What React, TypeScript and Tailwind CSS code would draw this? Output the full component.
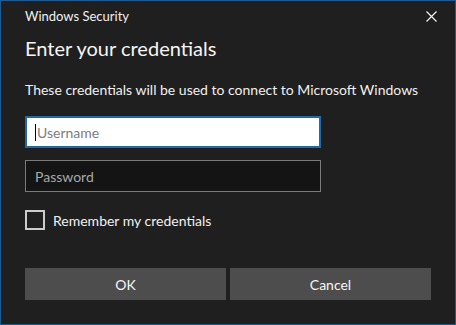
import React from "react";

export default function App() {
  const font = { fontFamily: 'Lato, "Noto Sans", sans-serif' };
  return (
    <div className="w-[456px] h-[325px] bg-[#1f1f1f] border border-[#1d5a94] text-white flex flex-col px-[24px]" style={font}>
      <div className="relative mt-[7px] h-[16px] flex items-center">
        <span className="text-[13px] leading-[16px] text-[#f0f0f0] whitespace-nowrap">Windows Security</span>
        <svg className="absolute right-[-6px] top-[3px]" width="11" height="11" viewBox="0 0 11 11">
          <path d="M0.5 0.5 L10.5 10.5 M10.5 0.5 L0.5 10.5" stroke="#f2f2f2" strokeWidth="1.2" />
        </svg>
      </div>
      <div className="mt-[10px] text-[20px] leading-[28px] text-[#f5f5f5] whitespace-nowrap">Enter your credentials</div>
      <div className="mt-[18px] text-[14px] leading-[20px] text-[#f0f0f0] whitespace-nowrap">
        These credentials will be used to connect to Microsoft Windows
      </div>
      <div className="mt-[16px] w-[296px] h-[32px] bg-white border-2 border-[#1f6aab] flex items-center pl-[8px]">
        <span className="w-[1px] h-[17px] bg-black mr-[1px]" />
        <span className="text-[14px] text-[#7d7d7d]">Username</span>
      </div>
      <div className="mt-[12px] w-[296px] h-[32px] bg-[#141414] border border-[#7a7a7a] flex items-center pl-[9px]">
        <span className="text-[14px] text-[#a9a9a9]">Password</span>
      </div>
      <div className="mt-[18px] h-[20px] flex items-center">
        <span className="w-[20px] h-[20px] border-2 border-[#cccccc]" />
        <span className="ml-[8px] text-[14px] text-[#f0f0f0] whitespace-nowrap">Remember my credentials</span>
      </div>
      <div className="mt-[38px] flex gap-[4px]">
        <div className="w-[201px] h-[32px] bg-[#4d4d4d] flex items-center justify-center text-[14px] text-[#f5f5f5]">OK</div>
        <div className="w-[201px] h-[32px] bg-[#4d4d4d] flex items-center justify-center text-[14px] text-[#f5f5f5]">Cancel</div>
      </div>
    </div>
  );
}
